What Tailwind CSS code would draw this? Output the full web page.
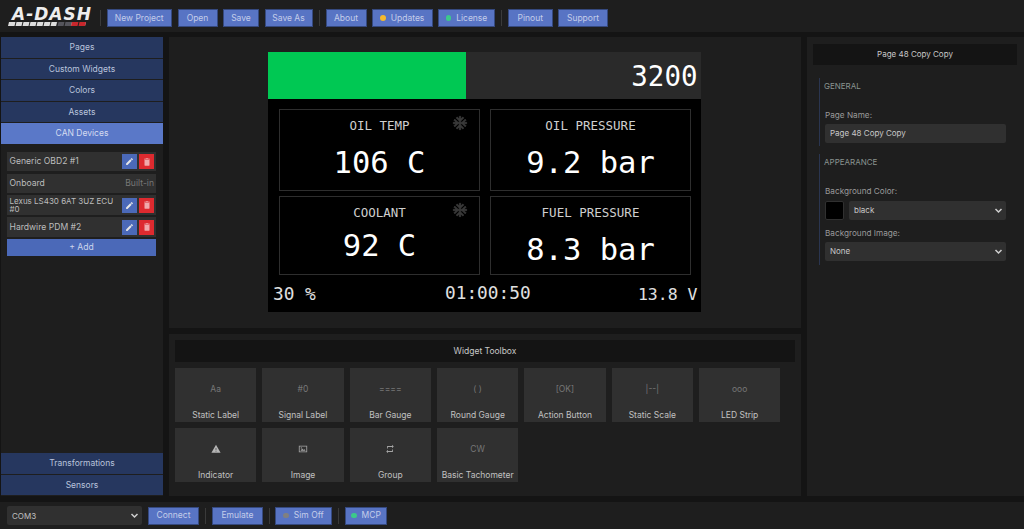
<!DOCTYPE html>
<html lang="en">
<head>
<meta charset="UTF-8" />
<meta name="viewport" content="width=device-width, initial-scale=1.0" />
<title>A-DASH</title>
<script src="https://cdn.jsdelivr.net/npm/@tailwindcss/browser@4"></script>
</head>
<body class="w-[1024px] h-[529px] overflow-hidden bg-[#141414] font-['Inter',sans-serif] text-[8.6px] text-[#c8c8c8]">
<!-- Top bar -->
<header class="h-[32px] bg-[#1e1e1e] flex items-center pt-[4px] pl-[8px] text-[#c4cdea] text-[8.5px]">
  <div class="w-[85px] h-[20px] flex flex-col shrink-0">
    <span class="h-[14px] pl-[4px] leading-[13px] text-[17px] font-bold italic font-['DejaVu_Sans',sans-serif] tracking-[1px] text-[#eeeeee] whitespace-nowrap">A-DASH</span>
    <svg width="85" height="5" viewBox="0 0 85 5" class="block">
      <polygon points="1,0 78,0 77,4 0,4" fill="#dddddd"/>
      <polygon points="49,0 64,0 63,4 48,4" fill="#55555c"/>
      <polygon points="64,0 78,0 77,4 63,4" fill="#c8272c"/>
      <path d="M8 0l-1 4M15 0l-1 4M22 0l-1 4M29 0l-1 4M36 0l-1 4M43 0l-1 4M50 0l-1 4M57 0l-1 4M71 0l-1 4" stroke="#1e1e1e" stroke-width="1"/>
    </svg>
  </div>
  <div class="w-[1px] h-[16px] bg-[#3a3a3a] ml-[7px] mr-[5.5px]"></div>
  <div class="flex items-center gap-[5.5px]">
    <button class="w-[65.5px] h-[18px] bg-[#5874c4] border border-[#35497f]">New Project</button>
    <button class="w-[40px] h-[18px] bg-[#5874c4] border border-[#35497f]">Open</button>
    <button class="w-[36px] h-[18px] bg-[#5874c4] border border-[#35497f]">Save</button>
    <button class="w-[48px] h-[18px] bg-[#5874c4] border border-[#35497f]">Save As</button>
  </div>
  <div class="w-[1px] h-[16px] bg-[#3a3a3a] ml-[6px] mr-[6px]"></div>
  <div class="flex items-center gap-[5.5px]">
    <button class="w-[41px] h-[18px] bg-[#5874c4] border border-[#35497f]">About</button>
    <button class="w-[60.5px] h-[18px] bg-[#5874c4] border border-[#35497f] flex items-center justify-center gap-[5px]"><span class="w-[5.5px] h-[5.5px] rounded-full bg-[#f5b92e]"></span>Updates</button>
    <button class="w-[57px] h-[18px] bg-[#5874c4] border border-[#35497f] flex items-center justify-center gap-[5px]"><span class="w-[5.5px] h-[5.5px] rounded-full bg-[#3cc98a]"></span>License</button>
  </div>
  <div class="w-[1px] h-[16px] bg-[#3a3a3a] ml-[6px] mr-[6px]"></div>
  <div class="flex items-center gap-[5.5px]">
    <button class="w-[44.5px] h-[18px] bg-[#5874c4] border border-[#35497f]">Pinout</button>
    <button class="w-[50px] h-[18px] bg-[#5874c4] border border-[#35497f]">Support</button>
  </div>
</header>

<div class="h-[459px] mt-[5px] flex pl-[1px] gap-[6px]">
  <!-- Left sidebar -->
  <aside class="w-[162px] bg-[#1e1e1e] flex flex-col text-center text-[#b9c3dc] text-[8.5px]">
    <div class="pt-[0.4px] flex flex-col gap-[1px]">
      <div class="h-[20.5px] leading-[21.5px] bg-[#26375f]">Pages</div>
      <div class="h-[20.5px] leading-[21.5px] bg-[#26375f]">Custom Widgets</div>
      <div class="h-[20.5px] leading-[21.5px] bg-[#26375f]">Colors</div>
      <div class="h-[20.5px] leading-[21.5px] bg-[#26375f]">Assets</div>
      <div class="h-[20.5px] leading-[21.5px] bg-[#5a78c8] text-[#d5dcf0]">CAN Devices</div>
    </div>
    <div class="mt-[8.5px] ml-[6px] w-[149px] flex flex-col gap-[2.5px] text-left text-[#bdbdbd] text-[8.6px]">
      <div class="h-[19px] bg-[#303030] flex items-center pl-[2.5px] pr-[2px]">
        <span class="flex-1">Generic OBD2 #1</span>
        <span class="w-[15px] h-[15px] bg-[#4b69b8] flex items-center justify-center"><svg width="9" height="9" viewBox="0 0 24 24" fill="#e6e6e6"><path d="M3 17.25V21h3.75L17.81 9.94l-3.75-3.75L3 17.25zM20.71 7.04a1 1 0 0 0 0-1.41l-2.34-2.34a1 1 0 0 0-1.41 0l-1.83 1.83 3.75 3.75 1.83-1.83z"/></svg></span>
        <span class="w-[15px] h-[15px] ml-[2px] bg-[#dd2a2f] flex items-center justify-center"><svg width="10" height="10" viewBox="0 0 24 24" fill="#f0a9ab"><path d="M6 19a2 2 0 0 0 2 2h8a2 2 0 0 0 2-2V7H6v12zM19 4h-3.5l-1-1h-5l-1 1H5v2h14V4z"/></svg></span>
      </div>
      <div class="h-[19px] bg-[#303030] flex items-center pl-[2.5px] pr-[2px]">
        <span class="flex-1">Onboard</span>
        <span class="text-[#777777]">Built-in</span>
      </div>
      <div class="h-[19.5px] bg-[#303030] flex items-center pl-[2.5px] pr-[2px]">
        <span class="flex-1 text-[8px] leading-[8.5px]">Lexus LS430 6AT 3UZ ECU #0</span>
        <span class="w-[15px] h-[15px] bg-[#4b69b8] flex items-center justify-center"><svg width="9" height="9" viewBox="0 0 24 24" fill="#e6e6e6"><path d="M3 17.25V21h3.75L17.81 9.94l-3.75-3.75L3 17.25zM20.71 7.04a1 1 0 0 0 0-1.41l-2.34-2.34a1 1 0 0 0-1.41 0l-1.83 1.83 3.75 3.75 1.83-1.83z"/></svg></span>
        <span class="w-[15px] h-[15px] ml-[2px] bg-[#dd2a2f] flex items-center justify-center"><svg width="10" height="10" viewBox="0 0 24 24" fill="#f0a9ab"><path d="M6 19a2 2 0 0 0 2 2h8a2 2 0 0 0 2-2V7H6v12zM19 4h-3.5l-1-1h-5l-1 1H5v2h14V4z"/></svg></span>
      </div>
      <div class="h-[19.5px] bg-[#303030] flex items-center pl-[2.5px] pr-[2px]">
        <span class="flex-1">Hardwire PDM #2</span>
        <span class="w-[15px] h-[15px] bg-[#4b69b8] flex items-center justify-center"><svg width="9" height="9" viewBox="0 0 24 24" fill="#e6e6e6"><path d="M3 17.25V21h3.75L17.81 9.94l-3.75-3.75L3 17.25zM20.71 7.04a1 1 0 0 0 0-1.41l-2.34-2.34a1 1 0 0 0-1.41 0l-1.83 1.83 3.75 3.75 1.83-1.83z"/></svg></span>
        <span class="w-[15px] h-[15px] ml-[2px] bg-[#dd2a2f] flex items-center justify-center"><svg width="10" height="10" viewBox="0 0 24 24" fill="#f0a9ab"><path d="M6 19a2 2 0 0 0 2 2h8a2 2 0 0 0 2-2V7H6v12zM19 4h-3.5l-1-1h-5l-1 1H5v2h14V4z"/></svg></span>
      </div>
      <div class="h-[17px] leading-[17px] -mt-[0.5px] bg-[#4b69b8] text-center text-[#ccd4ec]">+ Add</div>
    </div>
    <div class="mt-auto mb-[1px] flex flex-col gap-[1px]">
      <div class="h-[20.5px] leading-[20.5px] bg-[#26375f]">Transformations</div>
      <div class="h-[20.5px] leading-[20.5px] bg-[#26375f]">Sensors</div>
    </div>
  </aside>

  <!-- Center -->
  <main class="w-[632px] flex flex-col gap-[6px]">
    <section class="h-[291px] bg-[#1e1e1e] pt-[15px] pl-[99px]">
      <div class="w-[433px] h-[260px] bg-black font-['DejaVu_Sans_Mono',monospace] text-white flex flex-col">
        <div class="h-[47px] bg-[#2a2a2a] flex items-center">
          <div class="w-[198px] h-full bg-[#00c853]"></div>
          <span class="ml-auto mr-[3.5px] mt-[2px] text-[27.5px] leading-none">3200</span>
        </div>
        <div class="mt-[10px] ml-[11px] grid grid-cols-[201px_201px] grid-rows-[82px_79px] gap-x-[10px] gap-y-[5px]">
          <div class="border border-[#2e2e2e] relative flex flex-col items-center">
            <span class="mt-[8px] text-[12.5px] leading-[16px] text-[#cfcfcf]">OIL TEMP</span>
            <span class="mt-[11px] text-[30.5px] leading-[36px]">106 C</span>
            <svg class="absolute right-[11px] top-[5px]" width="16" height="16" viewBox="0 0 24 24" fill="#3a3a3a" stroke="#3a3a3a" stroke-width="1.2"><path d="M22 11h-4.17l3.24-3.24-1.41-1.42L15 11h-2V9l4.66-4.66-1.42-1.41L13 6.17V2h-2v4.17L7.76 2.93 6.34 4.34 11 9v2H9L4.34 6.34 2.93 7.76 6.17 11H2v2h4.17l-3.24 3.24 1.41 1.42L9 13h2v2l-4.66 4.66 1.42 1.41L11 17.83V22h2v-4.17l3.24 3.24 1.42-1.41L13 15v-2h2l4.66 4.66 1.41-1.42L17.83 13H22z"/></svg>
          </div>
          <div class="border border-[#2e2e2e] flex flex-col items-center">
            <span class="mt-[8px] text-[12.5px] leading-[16px] text-[#cfcfcf]">OIL PRESSURE</span>
            <span class="mt-[11px] text-[30.5px] leading-[36px]">9.2 bar</span>
          </div>
          <div class="border border-[#2e2e2e] relative flex flex-col items-center">
            <span class="mt-[8px] text-[12.5px] leading-[16px] text-[#cfcfcf]">COOLANT</span>
            <span class="mt-[7px] text-[30.5px] leading-[36px]">92 C</span>
            <svg class="absolute right-[11px] top-[5px]" width="16" height="16" viewBox="0 0 24 24" fill="#3a3a3a" stroke="#3a3a3a" stroke-width="1.2"><path d="M22 11h-4.17l3.24-3.24-1.41-1.42L15 11h-2V9l4.66-4.66-1.42-1.41L13 6.17V2h-2v4.17L7.76 2.93 6.34 4.34 11 9v2H9L4.34 6.34 2.93 7.76 6.17 11H2v2h4.17l-3.24 3.24 1.41 1.42L9 13h2v2l-4.66 4.66 1.42 1.41L11 17.83V22h2v-4.17l3.24 3.24 1.42-1.41L13 15v-2h2l4.66 4.66 1.41-1.42L17.83 13H22z"/></svg>
          </div>
          <div class="border border-[#2e2e2e] flex flex-col items-center">
            <span class="mt-[7.5px] text-[12.5px] leading-[16px] text-[#cfcfcf]">FUEL PRESSURE</span>
            <span class="mt-[11px] text-[30.5px] leading-[36px]">8.3 bar</span>
          </div>
        </div>
        <div class="mt-[8px] flex items-start text-[#e0e0e0] text-[17.8px] leading-[22px] pl-[5px] pr-[3.5px]">
          <span class="w-[172px]">30 %</span>
          <span class="-mt-[1px]">01:00:50</span>
          <span class="ml-auto mt-[1px] text-[16.5px]">13.8 V</span>
        </div>
      </div>
    </section>

    <section class="flex-1 bg-[#1e1e1e] p-[6px]">
      <div class="w-[620px] h-[22px] leading-[22px] bg-[#141414] text-center text-[#c8c8c8] text-[8.5px]">Widget Toolbox</div>
      <div class="mt-[6px] grid grid-cols-[repeat(7,81.33px)] auto-rows-[54px] gap-[6px] text-[#c0c0c0] text-center text-[8.5px]">
        <div class="bg-[#303030]"><div class="h-[40px] leading-[42px] text-[#777777]">Aa</div><div class="leading-[14px]">Static Label</div></div>
        <div class="bg-[#303030]"><div class="h-[40px] leading-[42px] text-[#777777]">#0</div><div class="leading-[14px]">Signal Label</div></div>
        <div class="bg-[#303030]"><div class="h-[40px] leading-[42px] text-[#777777]">====</div><div class="leading-[14px]">Bar Gauge</div></div>
        <div class="bg-[#303030]"><div class="h-[40px] leading-[42px] text-[#777777]">( )</div><div class="leading-[14px]">Round Gauge</div></div>
        <div class="bg-[#303030]"><div class="h-[40px] leading-[42px] text-[#777777]">[OK]</div><div class="leading-[14px]">Action Button</div></div>
        <div class="bg-[#303030]"><div class="h-[40px] leading-[42px] text-[#777777]">|--|</div><div class="leading-[14px]">Static Scale</div></div>
        <div class="bg-[#303030]"><div class="h-[40px] leading-[42px] text-[#777777]">ooo</div><div class="leading-[14px]">LED Strip</div></div>
        <div class="bg-[#303030]">
          <div class="h-[40px] pt-[16px] flex justify-center items-start"><svg width="10" height="10" viewBox="0 0 24 24" fill="#b5b5b5"><path d="M1 21h22L12 2 1 21zm12-3h-2v-2h2v2zm0-4h-2v-4h2v4z"/></svg></div>
          <div class="leading-[14px]">Indicator</div>
        </div>
        <div class="bg-[#303030]">
          <div class="h-[40px] pt-[16px] flex justify-center items-start"><svg width="10" height="10" viewBox="0 0 24 24" fill="#a5a5a5"><path d="M2 4h20v16H2V4zm2 2v12h16V6H4zm2 10l4-5 3 3.5 2-2.5 3 4H6zm2-8a1.5 1.5 0 1 1 0 3 1.5 1.5 0 0 1 0-3z"/></svg></div>
          <div class="leading-[14px]">Image</div>
        </div>
        <div class="bg-[#303030]">
          <div class="h-[40px] pt-[16px] flex justify-center items-start"><svg width="10" height="10" viewBox="0 0 24 24" fill="#a5a5a5"><path d="M7 7h10v3l4-4-4-4v3H5v6h2V7zm10 10H7v-3l-4 4 4 4v-3h12v-6h-2v4z"/></svg></div>
          <div class="leading-[14px]">Group</div>
        </div>
        <div class="bg-[#303030]"><div class="h-[40px] leading-[42px] text-[#777777]">CW</div><div class="leading-[14px]">Basic Tachometer</div></div>
      </div>
    </section>
  </main>

  <!-- Right panel -->
  <aside class="flex-1 bg-[#1e1e1e] pt-[7px] pl-[6px] pr-[7px]">
    <div class="h-[21px] leading-[21px] bg-[#141414] text-center text-[#c8c8c8] text-[8px]">Page 48 Copy Copy</div>
    <div class="mt-[13px] ml-[6px] h-[68px] border-l border-[#2a3550] pl-[4px] pt-[2.5px]">
      <div class="text-[8px] leading-[10px] text-[#8a9490]">GENERAL</div>
      <div class="mt-[18.5px] ml-[1px] leading-[12px] text-[8.2px] text-[#9a9a9a]">Page Name:</div>
      <div class="mt-[3px] ml-[1px] w-[181px] h-[18.5px] leading-[18.5px] rounded-[2px] bg-[#303030] pl-[5px] text-[8px] text-[#c8c8c8]">Page 48 Copy Copy</div>
    </div>
    <div class="mt-[8px] ml-[6px] h-[111px] border-l border-[#2a3550] pl-[4px] pt-[3px]">
      <div class="text-[8px] leading-[10px] text-[#8a9490]">APPEARANCE</div>
      <div class="mt-[18px] ml-[1px] leading-[12px] text-[8.2px] text-[#9a9a9a]">Background Color:</div>
      <div class="mt-[4px] ml-[1px] w-[181px] flex gap-[5px] text-[8px]">
        <div class="w-[19px] h-[18.5px] rounded-[2px] bg-black border border-[#303030]"></div>
        <div class="flex-1 h-[18.5px] rounded-[2px] bg-[#303030] pl-[5px] pr-[3px] flex items-center text-[#c8c8c8]">
          <span class="flex-1">black</span>
          <svg width="9" height="9" viewBox="0 0 24 24" fill="none" stroke="#cfcfcf" stroke-width="4"><path d="M4 8l8 8 8-8"/></svg>
        </div>
      </div>
      <div class="mt-[7.5px] ml-[1px] leading-[12px] text-[8.2px] text-[#9a9a9a]">Background Image:</div>
      <div class="mt-[3px] ml-[1px] w-[181px] h-[18.5px] rounded-[2px] bg-[#303030] pl-[5px] pr-[3px] flex items-center text-[8px] text-[#c8c8c8]">
        <span class="flex-1">None</span>
        <svg width="9" height="9" viewBox="0 0 24 24" fill="none" stroke="#cfcfcf" stroke-width="4"><path d="M4 8l8 8 8-8"/></svg>
      </div>
    </div>
  </aside>
</div>

<!-- Bottom bar -->
<footer class="mt-[6px] h-[27px] bg-[#1e1e1e] flex items-center pl-[7px] text-[#c4cdea] text-[8.5px]">
  <div class="w-[135px] h-[19px] rounded-[2px] bg-[#303030] pl-[5px] pr-[3px] flex items-center text-[8px] text-[#c0c0c0]">
    <span class="flex-1">COM3</span>
    <svg width="9" height="9" viewBox="0 0 24 24" fill="none" stroke="#cfcfcf" stroke-width="4"><path d="M4 8l8 8 8-8"/></svg>
  </div>
  <button class="ml-[6px] w-[51px] h-[18px] bg-[#5874c4] border border-[#35497f]">Connect</button>
  <div class="w-[1px] h-[16px] bg-[#3a3a3a] mx-[6px]"></div>
  <button class="w-[51px] h-[18px] bg-[#5874c4] border border-[#35497f]">Emulate</button>
  <div class="w-[1px] h-[16px] bg-[#3a3a3a] ml-[5.5px] mr-[5.5px]"></div>
  <button class="w-[57px] h-[18px] bg-[#5874c4] border border-[#35497f] flex items-center justify-center gap-[5px]"><span class="w-[5.5px] h-[5.5px] rounded-full bg-[#808080]"></span>Sim Off</button>
  <div class="w-[1px] h-[16px] bg-[#3a3a3a] mx-[6px]"></div>
  <button class="w-[42px] h-[18px] bg-[#5874c4] border border-[#35497f] flex items-center justify-center gap-[5px]"><span class="w-[5.5px] h-[5.5px] rounded-full bg-[#3cc98a]"></span>MCP</button>
</footer>
</body>
</html>
